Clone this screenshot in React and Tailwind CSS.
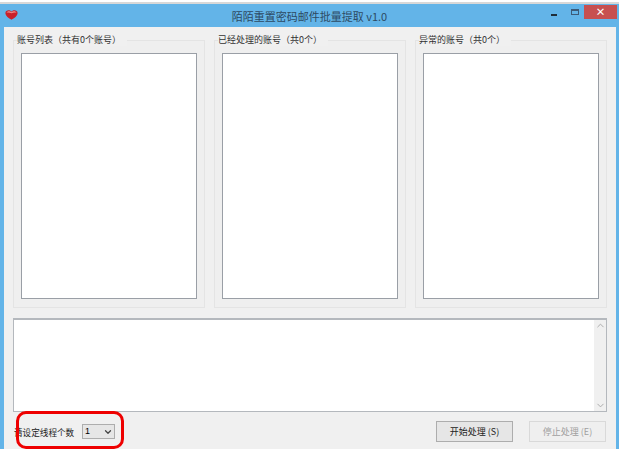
import { ChevronDown, ChevronUp } from 'lucide-react';

function GroupBox({ title }) {
    return (
        <div className="relative w-[192px] h-[268px] bg-[#efefef] border border-[#e4e4e4] px-[7px] pt-[12px] pb-[8px]">
            <span className="absolute left-[3px] -top-[7px] bg-[#f0f0f0] pr-[6px] text-[9px] leading-[12px] text-[#333]">{title}</span>
            <div className="w-full h-full bg-white border border-[#9a9fa6]"></div>
        </div>
    );
}

function Heart() {
    return (
        <svg width="13" height="10" viewBox="0 0 14 11" className="block">
            <path d="M7 10.8 C4 9 .3 6.8 .3 3.4 C.3 1.4 2 .3 3.8 .3 C5.2 .3 6.3 .9 7 1.8 C7.7 .9 8.8 .3 10.2 .3 C12 .3 13.7 1.4 13.7 3.4 C13.7 6.8 10 9 7 10.8Z" fill="#c9202a" />
            <path d="M1.5 3 C3 .8 5.5 1 7 2.4 C8.5 1 11 .8 12.5 3 C10 2.4 8.5 3.2 7 3.6 C5.5 3.2 4 2.4 1.5 3Z" fill="#f08a8a" />
        </svg>
    );
}

export default function App() {
    return (
        <div className="relative w-[619px] h-[449px] overflow-hidden bg-white font-['Noto_Sans_CJK_SC','Liberation_Sans',sans-serif] pt-[4px]">
            <div className="absolute left-0 right-0 top-[2px] h-[2px] bg-[#d8d8d8]"></div>
            <div className="h-[445px] w-[619px] bg-[#63b4e8] flex flex-col">
                {/* Title bar */}
                <div className="relative h-[23px] shrink-0 flex items-center justify-center">
                    <div className="absolute left-[5px] top-[6px]"><Heart /></div>
                    <span className="text-[11px] leading-[14px] text-[#2d4a63]">陌陌重置密码邮件批量提取 v1.0</span>
                    <div className="absolute right-[2px] top-[1px] flex items-start">
                        <div className="w-[6px] h-[2px] bg-[#1f2d3a] mt-[9px] mr-[14px]"></div>
                        <div className="w-[8px] h-[6px] border border-[#3c5a78] border-t-2 mt-[4px] mr-[5px]"></div>
                        <div className="w-[33px] h-[14px] bg-[#c75050] flex items-center justify-center text-white text-[10px] leading-none font-bold">×</div>
                    </div>
                </div>

                {/* Client area */}
                <div className="ml-[4px] mr-[3px] flex-1 bg-[#f0f0f0] px-[9px] pt-[13px] flex flex-col">
                    <div className="flex gap-[9px] w-[594px]">
                        <GroupBox title="账号列表（共有0个账号）" />
                        <GroupBox title="已经处理的账号（共0个）" />
                        <GroupBox title="异常的账号（共0个）" />
                    </div>

                    {/* Log box */}
                    <div className="mt-[10px] w-[594px] h-[94px] bg-white border border-[#b4b8bd] border-t-2 flex justify-end">
                        <div className="w-[12px] h-full bg-[#f0f0f0] flex flex-col justify-between items-center">
                            <ChevronUp size={11} strokeWidth={2} className="text-[#a6a6a6]" />
                            <ChevronDown size={11} strokeWidth={2} className="text-[#a6a6a6]" />
                        </div>
                    </div>

                    {/* Bottom controls */}
                    <div className="mt-[9px] w-[594px] flex items-center">
                        <span className="ml-[1px] w-[60px] whitespace-nowrap text-[8.6px] leading-[12px] text-[#222]">请设定线程个数</span>
                        <div className="ml-[8px] w-[33px] h-[15px] bg-[#e6e6e6] border border-[#adadad] flex items-center justify-between pl-[2px] pr-[1px]">
                            <span className="text-[9px] leading-none text-black font-['Liberation_Sans',sans-serif]">1</span>
                            <ChevronDown size={10} strokeWidth={3} className="text-[#444]" />
                        </div>
                        <button className="ml-auto w-[77px] h-[21px] bg-[#e6e6e6] border border-[#adadad] text-[9px] leading-none text-[#222]">开始处理 (S)</button>
                        <button className="ml-[16px] mr-[1px] w-[77px] h-[21px] bg-[#efefef] border border-[#d9d9d9] text-[9px] leading-none text-[#a0a0a0]">停止处理 (E)</button>
                    </div>
                </div>
            </div>

            {/* Red annotation */}
            <div className="absolute left-[16px] top-[411px] w-[108px] h-[38px] border-[3px] border-[#ee0000] rounded-[10px]"></div>
        </div>
    );
}
